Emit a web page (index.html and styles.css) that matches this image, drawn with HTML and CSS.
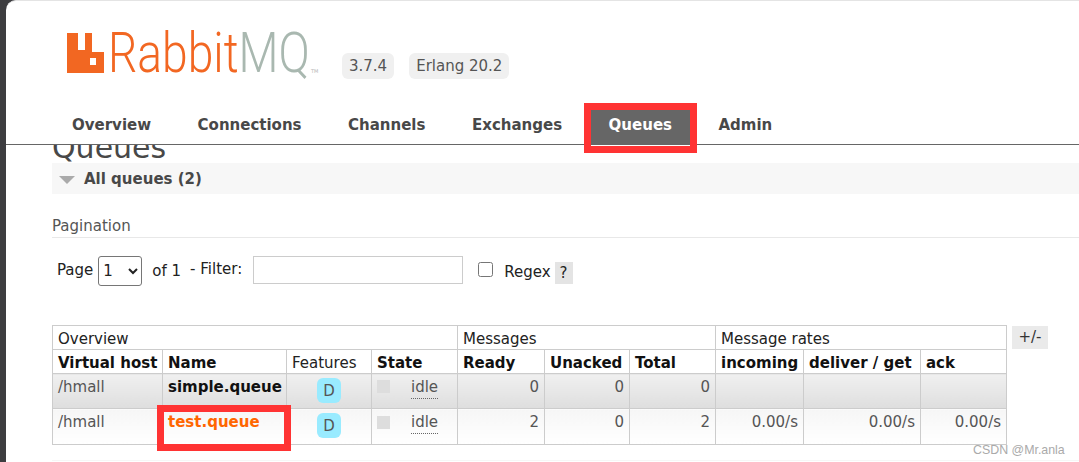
FILE: index.html
```html
<!DOCTYPE html>
<html lang="en">
<head>
    <meta charset="UTF-8">
    <meta name="viewport" content="width=device-width, initial-scale=1.0">
    <title>RabbitMQ Management</title>
    <link rel="stylesheet" href="styles.css">
</head>
<body>
    <div class="window">
        <div class="header">
            <div class="logo-row">
                <div class="logo">
                    <svg class="logo-icon" width="37" height="40" viewBox="0 0 37 40">
                        <path fill="#f26722" fill-rule="evenodd" d="M0 0H11V17H18V0H25V19H37V40H0ZM23 25V32H29V25Z"/>
                    </svg>
                    <div class="logo-name"><span class="logo-rabbit">Rabbit</span><span class="logo-mq">MQ</span></div>
                    <span class="logo-tm">TM</span>
                </div>
                <span class="version version-app">3.7.4</span>
                <span class="version">Erlang 20.2</span>
            </div>
            <ul class="tabs">
                <li><a href="#">Overview</a></li>
                <li><a href="#">Connections</a></li>
                <li><a href="#">Channels</a></li>
                <li><a href="#">Exchanges</a></li>
                <li><a href="#" class="active">Queues</a></li>
                <li><a href="#">Admin</a></li>
            </ul>
        </div>

        <div class="main">
            <h1>Queues</h1>
            <div class="section-bar">
                <span class="triangle"></span>
                <h2>All queues (2)</h2>
            </div>

            <h3>Pagination</h3>
            <div class="filter-row">
                <label class="page-label" for="page">Page</label>
                <select id="page" class="page-select"><option>1</option></select>
                <span class="page-of">of 1</span>
                <label class="filter-label" for="filter">- Filter:</label>
                <input id="filter" class="filter-input" type="text">
                <input id="regex" class="regex-check" type="checkbox">
                <label class="regex-label" for="regex">Regex</label>
                <span class="help">?</span>
            </div>

            <div class="table-row">
                <table class="queues">
                    <colgroup>
                        <col class="c-vhost"><col class="c-name"><col class="c-features"><col class="c-state">
                        <col class="c-ready"><col class="c-unacked"><col class="c-total">
                        <col class="c-incoming"><col class="c-deliver"><col class="c-ack">
                    </colgroup>
                    <thead>
                        <tr class="group-head">
                            <th colspan="4">Overview</th>
                            <th colspan="3">Messages</th>
                            <th colspan="3">Message rates</th>
                        </tr>
                        <tr>
                            <th>Virtual host</th>
                            <th>Name</th>
                            <th class="plain">Features</th>
                            <th>State</th>
                            <th>Ready</th>
                            <th>Unacked</th>
                            <th>Total</th>
                            <th>incoming</th>
                            <th>deliver / get</th>
                            <th>ack</th>
                        </tr>
                    </thead>
                    <tbody>
                        <tr class="row-odd">
                            <td>/hmall</td>
                            <td class="name">simple.queue</td>
                            <td class="center"><span class="badge">D</span></td>
                            <td><span class="state"><i class="state-dot"></i><abbr class="idle">idle</abbr></span></td>
                            <td class="num">0</td>
                            <td class="num">0</td>
                            <td class="num">0</td>
                            <td></td>
                            <td></td>
                            <td></td>
                        </tr>
                        <tr class="row-even">
                            <td>/hmall</td>
                            <td class="name hot">test.queue</td>
                            <td class="center"><span class="badge">D</span></td>
                            <td><span class="state"><i class="state-dot"></i><abbr class="idle">idle</abbr></span></td>
                            <td class="num">2</td>
                            <td class="num">0</td>
                            <td class="num">2</td>
                            <td class="num">0.00/s</td>
                            <td class="num">0.00/s</td>
                            <td class="num">0.00/s</td>
                        </tr>
                    </tbody>
                </table>
                <span class="columns-btn">+/-</span>
            </div>
            <div class="next-section"></div>
        </div>

        <!-- annotations on top of the screenshot -->
        <div class="mark mark-tab"></div>
        <div class="mark mark-name"></div>
        <div class="watermark">CSDN @Mr.anla</div>
    </div>
</body>
</html>
```

FILE: styles.css
```css
html, body {
    height: 100%;
}
body {
    margin: 0;
    overflow: hidden;
    background-color: #3d3d40;
    font-family: Verdana, "DejaVu Sans", sans-serif;
    font-size: 15px;
    color: #484848;
}
.window {
    position: relative;
    height: 461px;
    margin-left: 6px;
    border-top: 1px solid #e4e4e4;
    border-top-left-radius: 10px;
    background-color: #fff;
    overflow: hidden;
}
.header {
    padding: 32px 0 0 46px;
}
.logo-row {
    display: flex;
    align-items: flex-start;
    height: 75px;
}
.logo {
    position: relative;
    display: flex;
    width: 275px;
    margin-left: 15px;
}
.logo-icon {
    flex: none;
}
.logo-name {
    margin-left: 4px;
    font-family: Roboto, sans-serif;
    font-weight: 300;
    font-size: 55px;
    line-height: 40px;
    transform: scaleX(0.84);
    transform-origin: left center;
    white-space: nowrap;
}
.logo-rabbit {
    color: #f26722;
}
.logo-mq {
    color: #a9b8b0;
}
.logo-tm {
    position: absolute;
    left: 244px;
    top: 35px;
    font-size: 5px;
    color: #b5b5b5;
}
.version {
    margin-top: 20px;
    padding: 0 7px;
    height: 26px;
    line-height: 27px;
    border-radius: 6px;
    background-color: #f0f0f0;
    font-size: 15px;
    color: #555;
}
.version-app {
    margin-right: 15px;
}
.tabs {
    display: flex;
    gap: 12.5px;
    list-style: none;
    margin: 0 0 0 -46px;
    padding: 0 0 0 49px;
    border-bottom: 1px solid #666;
}
.tabs a {
    display: block;
    padding: 0 17px;
    height: 36px;
    line-height: 34px;
    font-weight: bold;
    color: #484848;
    text-decoration: none;
}
.tabs a.active {
    margin: 0 -1px;
    padding: 0 18px;
    background-color: #666;
    color: #fff;
}
.main {
    margin-left: 46px;
    overflow: hidden;
    height: 316px;
}
h1 {
    margin: -12px 0 0;
    font-size: 30px;
    font-weight: normal;
    line-height: 30px;
}
.section-bar {
    display: flex;
    align-items: center;
    height: 31px;
    background-color: #f7f7f7;
}
.triangle {
    width: 0;
    height: 0;
    margin: 2px 9px 0 7px;
    border-left: 8px solid transparent;
    border-right: 8px solid transparent;
    border-top: 8px solid #aaa;
}
h2 {
    margin: 0;
    font-size: 15px;
    font-weight: bold;
}
h3 {
    margin: 23px 0 0;
    padding-bottom: 2px;
    border-bottom: 1px solid #e8e8e8;
    font-size: 15px;
    font-weight: normal;
    line-height: 18px;
    color: #555;
}
.filter-row {
    display: flex;
    align-items: flex-start;
    margin: 18px 0 0 5px;
    height: 69px;
    color: #222;
}
.page-label {
    margin-top: 5px;
    line-height: 18px;
}
.page-select {
    width: 44px;
    height: 30px;
    margin-left: 5px;
    border: 1px solid #767676;
    border-radius: 3px;
    background-color: #fff;
    font-family: inherit;
    font-size: 15px;
    color: #222;
}
.page-of {
    margin: 6px 0 0 10px;
    line-height: 18px;
}
.filter-label {
    margin: 4px 0 0 9px;
    line-height: 18px;
}
.filter-input {
    box-sizing: border-box;
    width: 210px;
    height: 28px;
    margin: 0 0 0 11px;
    padding: 0 4px;
    border: 1px solid #ccc;
    background-color: #fff;
}
.regex-check {
    width: 15px;
    height: 15px;
    margin: 6px 0 0 15px;
}
.regex-label {
    margin: 7px 0 0 11px;
    line-height: 18px;
}
.help {
    width: 18px;
    height: 22px;
    margin: 6px 0 0 4px;
    line-height: 22px;
    text-align: center;
    background-color: #e4e4e4;
}
.table-row {
    display: flex;
    align-items: flex-start;
}
.queues {
    flex: none;
    box-sizing: border-box;
    width: 954px;
    table-layout: fixed;
    border-collapse: collapse;
    font-size: 15px;
}
.c-vhost { width: 110px; }
.c-name { width: 124px; }
.c-features { width: 85px; }
.c-state { width: 86px; }
.c-ready { width: 87px; }
.c-unacked { width: 85px; }
.c-total { width: 86px; }
.c-incoming { width: 88px; }
.c-deliver { width: 117px; }
.c-ack { width: 86px; }
.queues th, .queues td {
    border: 1px solid #ccc;
    padding: 0 5px;
    text-align: left;
    white-space: nowrap;
    overflow: hidden;
}
.queues th {
    height: 20px;
    padding-top: 3px;
    line-height: 20px;
    color: #111;
}
.group-head th, .queues th.plain {
    font-weight: normal;
    color: #222;
}
.queues td {
    vertical-align: top;
    padding-top: 2px;
    line-height: 22px;
    color: #555;
}
.row-odd td {
    height: 32px;
    background: linear-gradient(#f0f0f0, #dedede);
}
.row-even td {
    height: 33px;
    background: linear-gradient(#f6f6f6, #fff);
}
.queues td.name {
    font-weight: bold;
    color: #111;
}
.queues td.hot {
    color: #ff6600;
}
.queues td.num {
    text-align: right;
}
.queues td.center {
    text-align: center;
}
.badge {
    display: inline-block;
    width: 24px;
    height: 25px;
    margin-top: 2px;
    line-height: 26px;
    border-radius: 6px;
    background-color: #99ebff;
    font-size: 15px;
}
.state {
    display: flex;
    align-items: flex-start;
}
.state-dot {
    width: 13px;
    height: 13px;
    margin-top: 4px;
    background-color: #ddd;
}
.row-even .state-dot {
    margin-top: 5px;
}
.idle {
    margin-left: 21px;
    line-height: 22px;
    border-bottom: 1px dotted #666;
    font-size: 15px;
}
.columns-btn {
    width: 36px;
    height: 23px;
    margin-left: 5px;
    margin-top: 1px;
    line-height: 23px;
    text-align: center;
    background-color: #eaeaea;
    color: #333;
}
.next-section {
    height: 2px;
    margin-top: 15px;
    background-color: #f6f6f6;
}
.mark {
    position: absolute;
    box-sizing: border-box;
    border: 7px solid #ff3333;
}
.mark-tab {
    left: 578px;
    top: 102px;
    width: 113px;
    height: 50px;
}
.mark-name {
    left: 151px;
    top: 404px;
    width: 134px;
    height: 46px;
}
.watermark {
    position: absolute;
    left: 967px;
    top: 442px;
    font-family: Arial, "Liberation Sans", sans-serif;
    font-size: 12.4px;
    color: #aaa;
}
```
